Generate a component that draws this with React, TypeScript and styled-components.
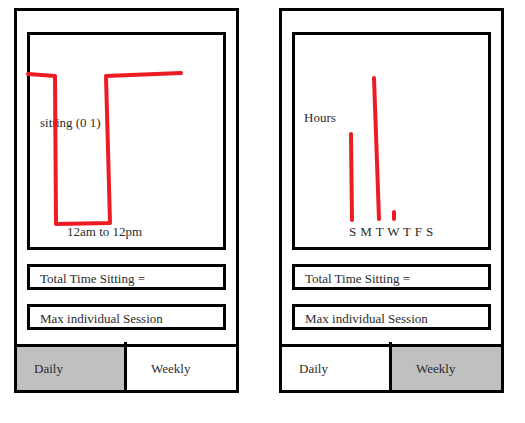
import React from "react";
import styled, { createGlobalStyle } from "styled-components";

const SERIF = `"Liberation Serif", serif`;

const GlobalStyle = createGlobalStyle`
  html, body {
    margin: 0;
    padding: 0;
    background: #ffffff;
  }
  body {
    font-family: ${SERIF};
    color: #2b2b2b;
  }
`;

const Page = styled.div`
  display: flex;
  align-items: flex-start;
  gap: 40px;
  padding: 8px 0 0 14px;
  font-family: ${SERIF};
`;

const Phone = styled.div`
  width: 225px;
  height: 385px;
  box-sizing: border-box;
  border: 3px solid #000;
  background: #fff;
  display: flex;
  flex-direction: column;
`;

const Body = styled.div`
  display: flex;
  flex-direction: column;
  gap: 14px;
  padding: 21px 10px 14px;
`;

const ChartBox = styled.div`
  height: 218px;
  box-sizing: border-box;
  border: 3px solid #000;
`;

const ChartSvg = styled.svg`
  display: block;
  width: 100%;
  height: 100%;
  overflow: visible;

  text {
    font-family: ${SERIF};
    font-size: 13px;
    fill: #2b2b2b;
  }
`;

const StatBox = styled.div`
  height: 26px;
  box-sizing: border-box;
  border: 3px solid #000;
  display: flex;
  align-items: center;
  padding: 2px 0 0 10px;
  font-family: ${SERIF};
  font-size: 13px;
  line-height: 1;
  white-space: nowrap;
  color: #2b2b2b;
`;

const TabBar = styled.div`
  display: flex;
  height: 46px;
  box-sizing: border-box;
  border-top: 3px solid #000;
`;

const Tab = styled.div<{ $active: boolean; $indent: number; $width?: number }>`
  ${(p) => (p.$width ? `width: ${p.$width}px;` : "flex: 1;")}
  display: flex;
  align-items: center;
  padding-left: ${(p) => p.$indent}px;
  box-sizing: border-box;
  background: ${(p) => (p.$active ? "#c0c0c0" : "#ffffff")};
  font-family: ${SERIF};
  font-size: 13px;
  color: #2b2b2b;
`;

const Divider = styled.div`
  width: 3px;
  background: #000;
  margin: -5px 0 -4px;
`;

const RED = "#ed1c24";

const DailyChart: React.FC = () => (
  <ChartSvg viewBox="0 0 193 212">
    <text x="10" y="92">sitting (0 1)</text>
    <text x="37" y="201">12am to 12pm</text>
    <polyline
      points="-2,39 25,41 26,189 80,188 76,41 151,38"
      fill="none"
      stroke={RED}
      strokeWidth="4"
      strokeLinejoin="round"
      strokeLinecap="round"
    />
  </ChartSvg>
);

const WeeklyChart: React.FC = () => (
  <ChartSvg viewBox="0 0 191 212">
    <text x="8" y="87">Hours</text>
    <text x="53" y="201" letterSpacing="0.4">S M T W T F S</text>
    <g stroke={RED} strokeWidth="4" strokeLinecap="round" fill="none">
      <line x1="55" y1="99" x2="56" y2="185" />
      <line x1="78" y1="43" x2="83" y2="184" />
      <line x1="98" y1="177" x2="98" y2="184" />
    </g>
  </ChartSvg>
);

type ScreenProps = { mode: "daily" | "weekly" };

const Screen: React.FC<ScreenProps> = ({ mode }) => (
  <Phone>
    <Body>
      <ChartBox>{mode === "daily" ? <DailyChart /> : <WeeklyChart />}</ChartBox>
      <StatBox>Total Time Sitting =</StatBox>
      <StatBox>Max individual Session</StatBox>
    </Body>
    <TabBar>
      <Tab $active={mode === "daily"} $indent={17} $width={107}>
        Daily
      </Tab>
      <Divider />
      <Tab $active={mode === "weekly"} $indent={24}>
        Weekly
      </Tab>
    </TabBar>
  </Phone>
);

export default function App() {
  return (
    <>
      <GlobalStyle />
      <Page>
        <Screen mode="daily" />
        <Screen mode="weekly" />
      </Page>
    </>
  );
}
